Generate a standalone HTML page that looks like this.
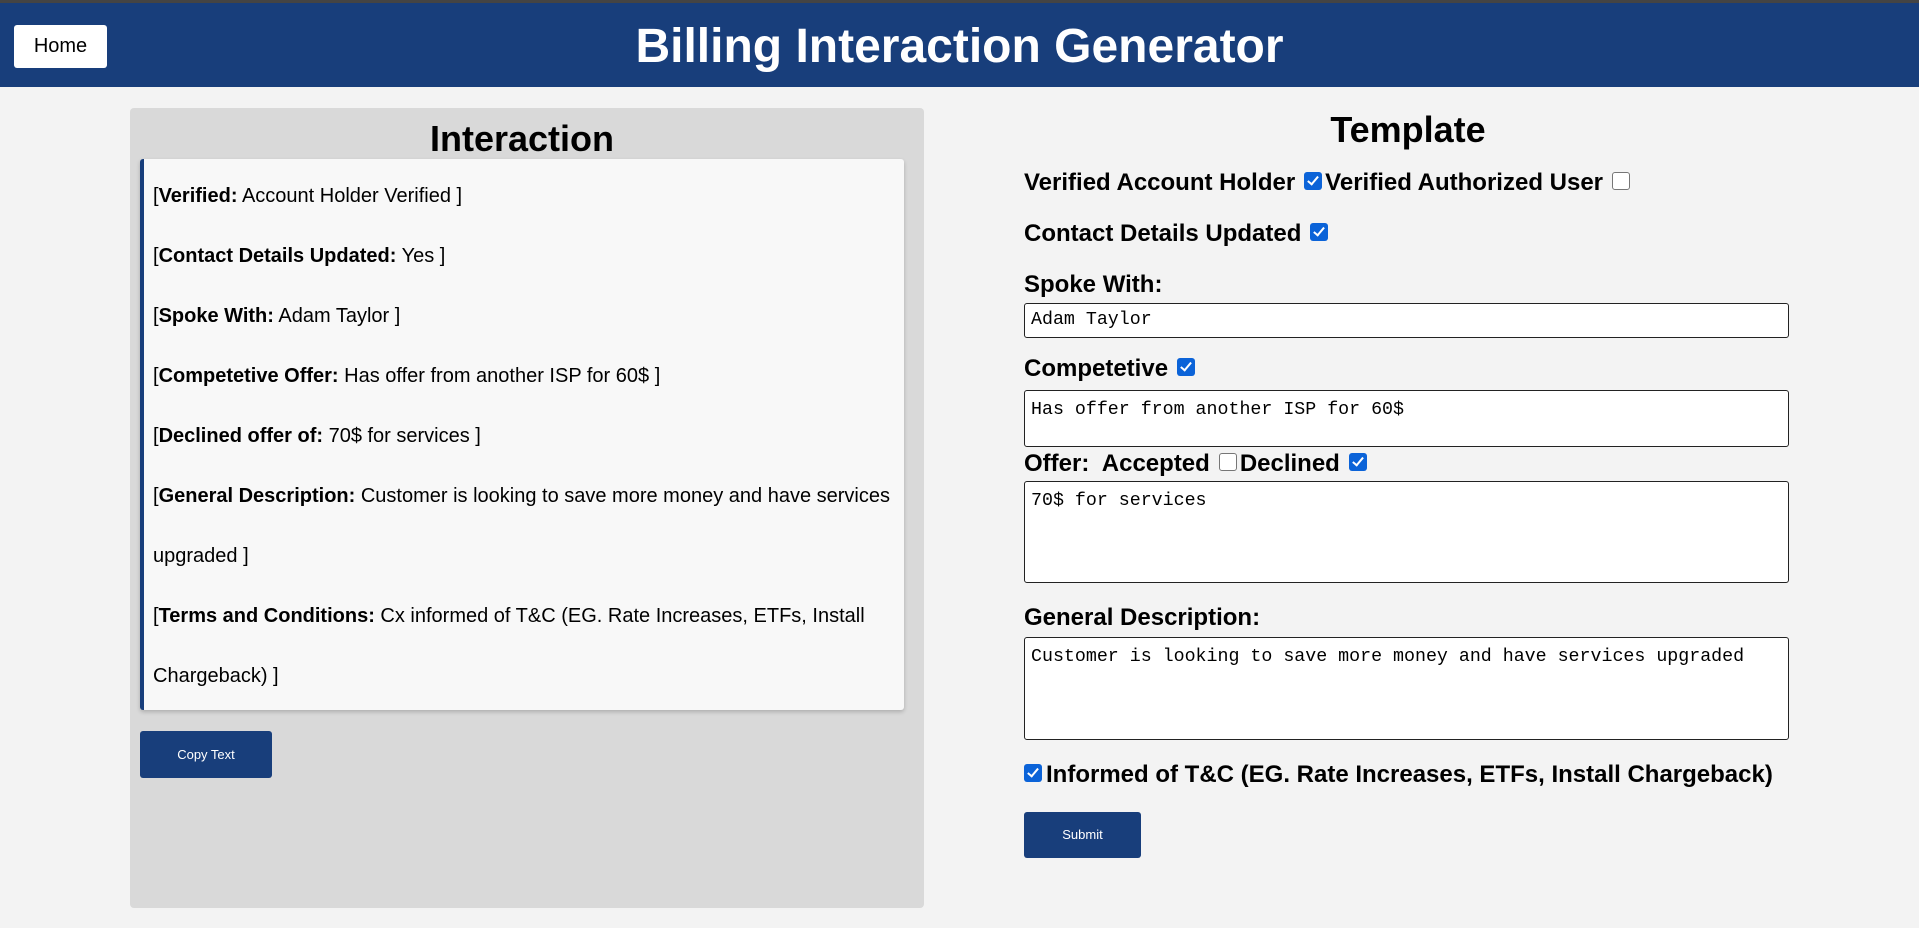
<!DOCTYPE html>
<html><head><meta charset="utf-8"><style>
*{box-sizing:border-box;margin:0;padding:0}
body{width:1919px;height:928px;background:#f3f3f3;font-family:"Liberation Sans",Arial,sans-serif;position:relative;overflow:hidden;color:#000}
.hdr{position:absolute;left:0;top:0;width:1919px;height:87px;background:#183e7b;border-top:3px solid #444}
.home{position:absolute;left:14px;top:22px;width:93px;height:43px;background:#fff;border-radius:3px;font-size:20px;line-height:43px;text-align:center}
.title{position:absolute;left:0;width:1919px;top:16px;text-align:center;color:#fff;font-weight:bold;font-size:48px}
.lp{position:absolute;left:130px;top:108px;width:794px;height:800px;background:#d9d9d9;border-radius:4px}
.h2{position:absolute;font-weight:bold;font-size:36px;text-align:center}
.box{position:absolute;left:140px;top:159px;width:764px;height:551px;background:#f8f8f8;border-left:4px solid #183e7b;border-radius:3px;box-shadow:0 2px 4px rgba(0,0,0,.2)}
.ln{position:absolute;left:153px;font-size:20px;white-space:nowrap}
.btn{position:absolute;background:#183e7b;color:#fff;font-size:13px;text-align:center;border-radius:3px}
.lbl{position:absolute;left:1024px;font-size:24px;font-weight:bold;white-space:nowrap}
.cb{display:inline-block;width:18px;height:18px;border-radius:3px;vertical-align:0px;position:relative;margin:0 4px 0 9px}
.on{background:#0b63d8}
.on:after{content:"";position:absolute;left:6px;top:2px;width:4px;height:9px;border:solid #fff;border-width:0 2px 2px 0;transform:rotate(40deg)}
.off{border:1.5px solid #767676;background:#fff}
.ta{position:absolute;left:1024px;width:765px;background:#fff;border:1.5px solid #222;border-radius:3px;font-family:"Liberation Mono",monospace;font-size:18.3px;padding:9px 6px}
</style></head><body>
<div class="hdr"><div class="home">Home</div><div class="title">Billing Interaction Generator</div></div>
<div class="lp"></div>
<div class="h2" style="left:125px;width:794px;top:118px">Interaction</div>
<div class="box"></div>
<div class="ln" style="top:185px">[<b>Verified:</b> Account Holder Verified ]</div>
<div class="ln" style="top:245px">[<b>Contact Details Updated:</b> Yes ]</div>
<div class="ln" style="top:305px">[<b>Spoke With:</b> Adam Taylor ]</div>
<div class="ln" style="top:365px">[<b>Competetive Offer:</b> Has offer from another ISP for 60$ ]</div>
<div class="ln" style="top:425px">[<b>Declined offer of:</b> 70$ for services ]</div>
<div class="ln" style="top:485px">[<b>General Description:</b> Customer is looking to save more money and have services</div>
<div class="ln" style="top:545px">upgraded ]</div>
<div class="ln" style="top:605px">[<b>Terms and Conditions:</b> Cx informed of T&amp;C (EG. Rate Increases, ETFs, Install</div>
<div class="ln" style="top:665px">Chargeback) ]</div>
<div class="btn" style="left:140px;top:731px;width:132px;height:47px;line-height:47px">Copy Text</div>

<div class="h2" style="left:1208px;width:400px;top:109px">Template</div>
<div class="lbl" style="top:169px">Verified Account Holder<span class="cb on" style="margin-right:3px"></span>Verified Authorized User<span class="cb off"></span></div>
<div class="lbl" style="top:220px">Contact Details Updated<span class="cb on"></span></div>
<div class="lbl" style="top:271px">Spoke With:</div>
<div class="ta" style="top:303px;height:35px;padding-top:6px">Adam Taylor</div>
<div class="lbl" style="top:355px">Competetive<span class="cb on"></span></div>
<div class="ta" style="top:390px;height:57px">Has offer from another ISP for 60$</div>
<div class="lbl" style="top:450px">Offer:&nbsp; Accepted<span class="cb off" style="margin-right:3px"></span>Declined<span class="cb on"></span></div>
<div class="ta" style="top:481px;height:102px">70$ for services</div>
<div class="lbl" style="top:604px">General Description:</div>
<div class="ta" style="top:637px;height:103px">Customer is looking to save more money and have services upgraded</div>
<div class="lbl" style="top:761px"><span class="cb on" style="margin-left:0"></span>Informed of T&amp;C (EG. Rate Increases, ETFs, Install Chargeback)</div>
<div class="btn" style="left:1024px;top:812px;width:117px;height:46px;line-height:46px">Submit</div>
</body></html>
